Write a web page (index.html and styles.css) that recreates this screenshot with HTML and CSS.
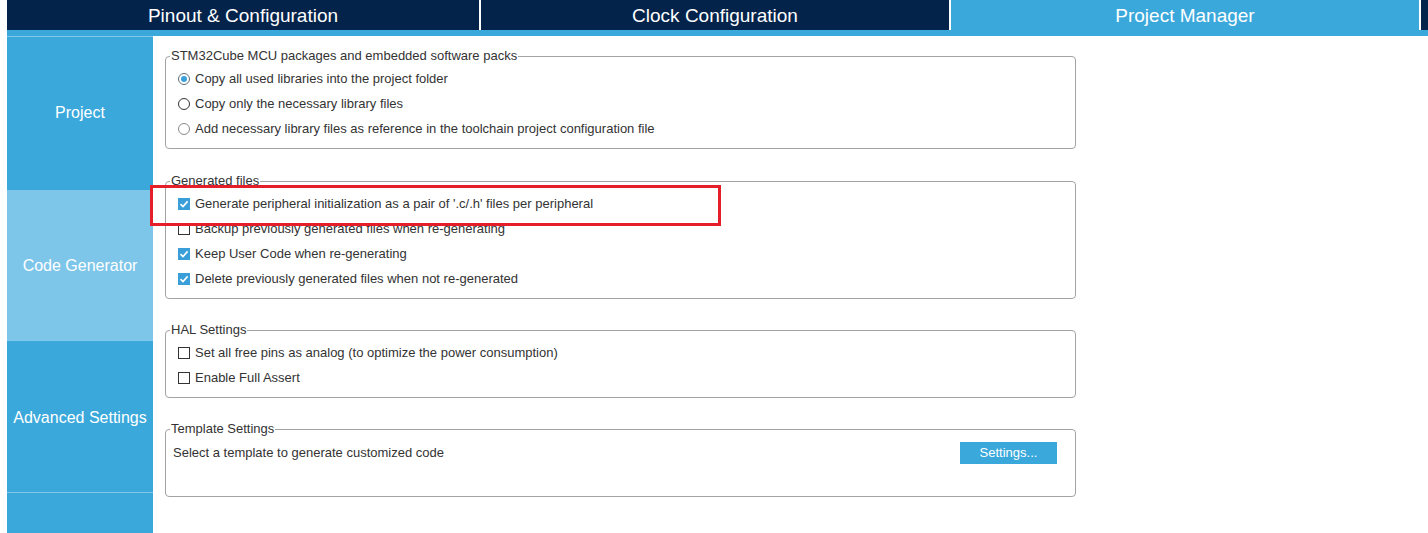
FILE: index.html
```html
<!DOCTYPE html>
<html>
<head>
<meta charset="utf-8">
<link rel="stylesheet" href="styles.css">
</head>
<body>
<div class="page">
  <div class="tabs">
    <div class="tab">Pinout &amp; Configuration</div>
    <div class="tab">Clock Configuration</div>
    <div class="tab active">Project Manager</div>
    <div class="tab-rest"></div>
  </div>
  <div class="strip"></div>
  <div class="main">
    <div class="sidebar">
      <div class="side-item">Project</div>
      <div class="side-item selected">Code Generator</div>
      <div class="side-item adv">Advanced Settings</div>
      <div class="side-item last"></div>
    </div>
    <div class="content">
      <fieldset class="group first">
        <legend>STM32Cube MCU packages and embedded software packs</legend>
        <div class="rows">
          <div class="row"><span class="radio on"></span>Copy all used libraries into the project folder</div>
          <div class="row"><span class="radio"></span>Copy only the necessary library files</div>
          <div class="row"><span class="radio dim"></span>Add necessary library files as reference in the toolchain project configuration file</div>
        </div>
      </fieldset>
      <fieldset class="group">
        <legend>Generated files</legend>
        <div class="rows">
          <div class="row"><span class="cb on"><svg viewBox="0 0 12 12" width="12" height="12"><path d="M2.5 6.2 L5 8.6 L9.6 3.4" fill="none" stroke="#fff" stroke-width="1.6"/></svg></span>Generate peripheral initialization as a pair of '.c/.h' files per peripheral</div>
          <div class="row"><span class="cb"></span>Backup previously generated files when re-generating</div>
          <div class="row"><span class="cb on"><svg viewBox="0 0 12 12" width="12" height="12"><path d="M2.5 6.2 L5 8.6 L9.6 3.4" fill="none" stroke="#fff" stroke-width="1.6"/></svg></span>Keep User Code when re-generating</div>
          <div class="row"><span class="cb on"><svg viewBox="0 0 12 12" width="12" height="12"><path d="M2.5 6.2 L5 8.6 L9.6 3.4" fill="none" stroke="#fff" stroke-width="1.6"/></svg></span>Delete previously generated files when not re-generated</div>
        </div>
      </fieldset>
      <fieldset class="group">
        <legend>HAL Settings</legend>
        <div class="rows">
          <div class="row"><span class="cb"></span>Set all free pins as analog (to optimize the power consumption)</div>
          <div class="row"><span class="cb"></span>Enable Full Assert</div>
        </div>
      </fieldset>
      <fieldset class="group template">
        <legend>Template Settings</legend>
        <div class="template-row">
          <span>Select a template to generate customized code</span>
          <span class="btn">Settings...</span>
        </div>
      </fieldset>
    </div>
  </div>
  <div class="highlight"></div>
</div>
</body>
</html>
```
FILE: styles.css
```css
* { box-sizing: border-box; }
html, body { margin: 0; padding: 0; background: #fff; }
body { font-family: "Liberation Sans", Arial, sans-serif; }
.page {
  position: relative;
  width: 1428px;
  height: 533px;
  padding-left: 7px;
  overflow: hidden;
}
.tabs {
  display: flex;
  height: 30px;
  background: #03234b;
}
.tab {
  color: #fff;
  font-size: 19px;
  line-height: 31px;
  text-align: center;
  width: 470px;
  border-right: 2px solid #fff;
  background: #03234b;
}
.tab:first-child { width: 474px; }
.tab.active { background: #3aa8db; }
.tab-rest { flex: 1; }
.strip { height: 6px; background: #3aa8db; }
.main {
  display: flex;
  height: 497px;
}
.sidebar {
  width: 146px;
  background: #3aa8db;
  display: flex;
  flex-direction: column;
}
.side-item {
  height: 152px;
  border-top: 1px solid #83c9ec;
  color: #fff;
  font-size: 16px;
  display: flex;
  align-items: center;
  justify-content: center;
  flex-shrink: 0;
}
.side-item.selected {
  background: #7dc6ea;
  border-top: 2px solid #3aa8db;
  padding-top: 1px;
}
.side-item.adv { padding-top: 3px; }
.side-item.last { flex: 1; }
.content {
  padding-left: 12px;
  padding-top: 13px;
}
.group {
  width: 911px;
  margin: 0 0 24px 0;
  padding: 3px 0 7px 4px;
  border: 1px solid #a3a3a3;
  border-radius: 4px;
  font-size: 13px;
  line-height: 14px;
  color: #333;
}
.group.first { margin-bottom: 25px; }
.group legend {
  padding: 0 1px;
  color: #333;
}
.rows { padding-left: 8px; }
.row {
  height: 25px;
  display: flex;
  align-items: center;
}
.radio {
  width: 12px;
  height: 12px;
  border: 1px solid #333;
  border-radius: 50%;
  margin-right: 5px;
  display: inline-flex;
  align-items: center;
  justify-content: center;
  background: #fff;
}
.radio.on { border-color: #5a6f80; }
.radio.on::after {
  content: "";
  width: 6px;
  height: 6px;
  border-radius: 50%;
  background: #3aa0dc;
}
.radio.dim { border-color: #8a8a8a; }
.cb {
  width: 12px;
  height: 12px;
  border: 1px solid #333;
  margin-right: 5px;
  background: #fff;
  display: inline-flex;
}
.cb.on {
  border: none;
  background: #3a9fd8;
}
.cb svg { display: block; }
.template {
  margin-top: 1px;
  padding: 5px 0 31px 4px;
}
.template-row {
  display: flex;
  justify-content: space-between;
  align-items: center;
  height: 24px;
  padding-left: 3px;
  padding-right: 18px;
  color: #333;
}
.btn {
  width: 97px;
  height: 22px;
  background: #3aa8db;
  color: #fff;
  display: flex;
  align-items: center;
  justify-content: center;
  font-size: 13px;
}
.highlight {
  position: absolute;
  left: 150px;
  top: 185px;
  width: 571px;
  height: 41px;
  border: 3px solid #e41f2a;
}
```
